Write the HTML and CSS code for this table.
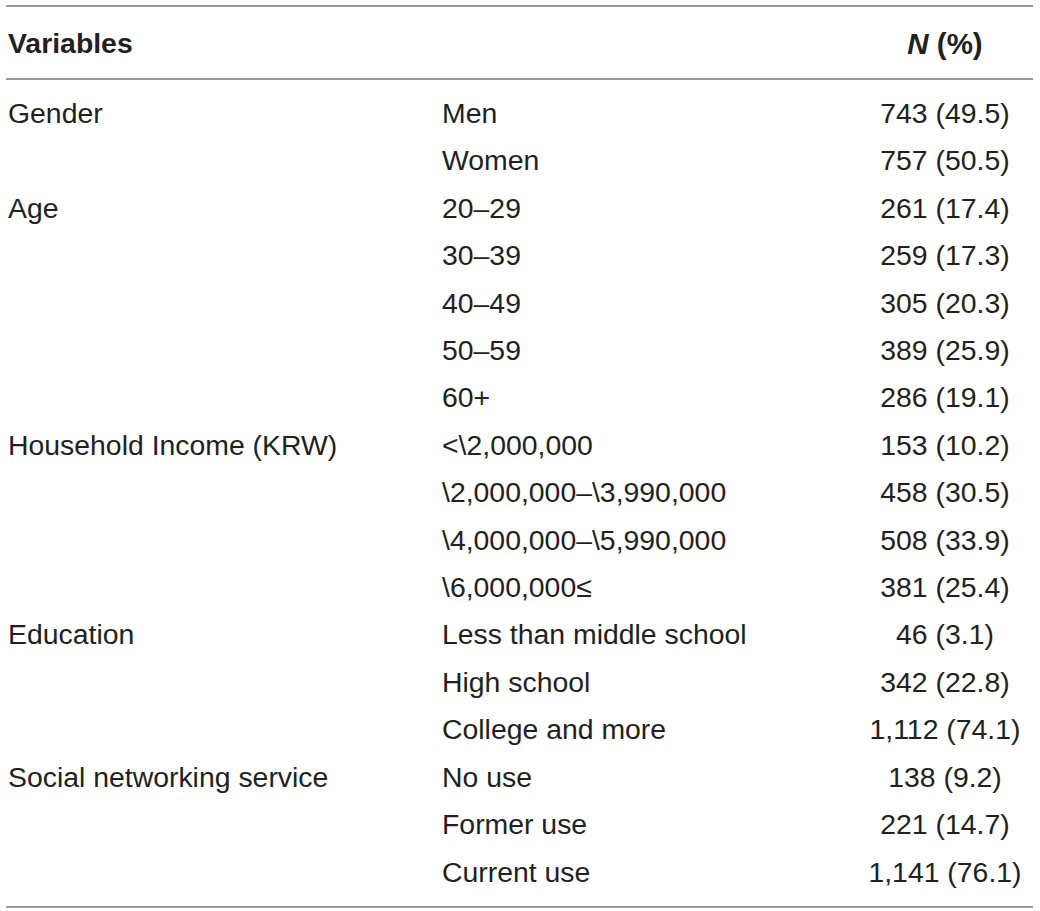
FILE: index.html
```html
<!DOCTYPE html>
<html lang="en">
<head>
  <meta charset="UTF-8" />
  <meta name="viewport" content="width=device-width, initial-scale=1.0"/>
  <title>Sample characteristics</title>
  <link rel="stylesheet" href="styles.css">
</head>
<body>
  <table class="stats">
    <colgroup>
      <col class="col-var" />
      <col class="col-cat" />
      <col class="col-n" />
    </colgroup>
    <thead>
      <tr>
        <th class="var">Variables</th>
        <th></th>
        <th class="n"><i>N</i> (%)</th>
      </tr>
    </thead>
    <tbody>
      <tr class="first"><td>Gender</td><td>Men</td><td class="n">743 (49.5)</td></tr>
      <tr><td></td><td>Women</td><td class="n">757 (50.5)</td></tr>
      <tr><td>Age</td><td>20–29</td><td class="n">261 (17.4)</td></tr>
      <tr><td></td><td>30–39</td><td class="n">259 (17.3)</td></tr>
      <tr><td></td><td>40–49</td><td class="n">305 (20.3)</td></tr>
      <tr><td></td><td>50–59</td><td class="n">389 (25.9)</td></tr>
      <tr><td></td><td>60+</td><td class="n">286 (19.1)</td></tr>
      <tr><td>Household Income (KRW)</td><td>&lt;\2,000,000</td><td class="n">153 (10.2)</td></tr>
      <tr><td></td><td>\2,000,000–\3,990,000</td><td class="n">458 (30.5)</td></tr>
      <tr><td></td><td>\4,000,000–\5,990,000</td><td class="n">508 (33.9)</td></tr>
      <tr><td></td><td>\6,000,000≤</td><td class="n">381 (25.4)</td></tr>
      <tr><td>Education</td><td>Less than middle school</td><td class="n">46 (3.1)</td></tr>
      <tr><td></td><td>High school</td><td class="n">342 (22.8)</td></tr>
      <tr><td></td><td>College and more</td><td class="n">1,112 (74.1)</td></tr>
      <tr><td>Social networking service</td><td>No use</td><td class="n">138 (9.2)</td></tr>
      <tr><td></td><td>Former use</td><td class="n">221 (14.7)</td></tr>
      <tr class="last"><td></td><td>Current use</td><td class="n">1,141 (76.1)</td></tr>
    </tbody>
  </table>
</body>
</html>
```

FILE: styles.css
```css
body {
  margin: 0;
  background: #fff;
  font-family: "Liberation Sans", Arial, sans-serif;
  color: #231f20;
}
.stats {
  margin: 5px 0 0 6px;
  width: 1027px;
  border-collapse: collapse;
  table-layout: fixed;
  border-top: 2px solid #9a9a9a;
  border-bottom: 2px solid #9a9a9a;
  font-size: 28.4px;
}
.col-var {
  width: 434px;
}
.col-cat {
  width: 417px;
}
.col-n {
  width: 176px;
}
.stats th {
  height: 69px;
  padding: 2px 0 0 2px;
  text-align: left;
  font-weight: bold;
  border-bottom: 2px solid #9a9a9a;
}
.stats th.n {
  font-size: 29.5px;
}
.stats td {
  padding: 0 0 0 2px;
  height: 47.4px;
  line-height: 47.4px;
  white-space: nowrap;
}
.stats .n {
  text-align: center;
  padding-left: 0;
}
.stats .first td {
  padding-top: 10px;
}
.stats .last td {
  padding-bottom: 10px;
}
```
